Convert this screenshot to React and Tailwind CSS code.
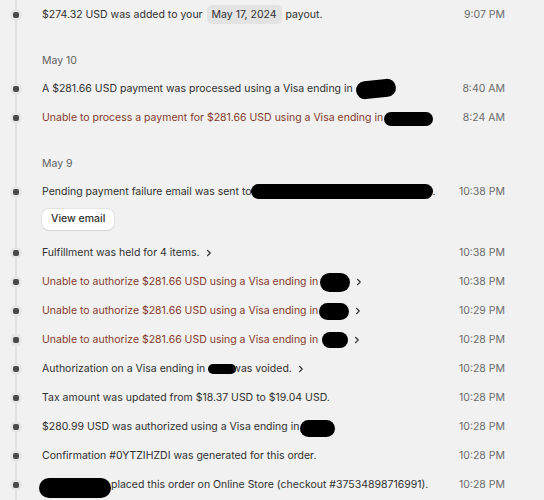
import React from 'react';

const Chevron = () => (
    <svg width="8" height="8" viewBox="0 0 8 8" className="ml-[5px] shrink-0">
        <path d="M2.6 1.4 5.2 4 2.6 6.6" fill="none" stroke="#303030" strokeWidth="1.3" strokeLinecap="round" strokeLinejoin="round" />
    </svg>
);

const Blob = ({ w, h, className = '' }) => (
    <span
        className={`inline-block bg-black rounded-full align-middle shrink-0 ${className}`}
        style={{ width: w, height: h }}
    />
);

const Row = ({ time, tone = 'normal', children }) => (
    <div className="flex items-center h-[29px]">
        <div className="w-[32px] flex justify-center shrink-0">
            <div className="w-[12px] h-[12px] rounded-full bg-[#e6e6e6] flex items-center justify-center">
                <div className="w-[6px] h-[6px] rounded-[2px] bg-[#4a4a4a]" />
            </div>
        </div>
        <div
            className={`ml-[10px] flex-1 flex items-center whitespace-nowrap ${tone === 'critical' ? 'text-[#86392b]' : 'text-[#303030]'}`}
        >
            {children}
        </div>
        <div className="pr-[39px] text-[#6b6b6b] whitespace-nowrap">{time}</div>
    </div>
);

const DayLabel = ({ children }) => (
    <div className="pl-[42px] pt-[22px] pb-[3px] h-[45px] leading-[20px] text-[#616161]">{children}</div>
);

export default function App() {
    return (
        <div
            className="relative w-[544px] h-[500px] overflow-hidden bg-[#f1f1f1] text-[10.5px]"
            style={{ fontFamily: 'Inter, "Noto Sans", sans-serif' }}
        >
            <div className="absolute left-[15px] top-0 bottom-0 w-[2px] bg-[#e2e2e2]" />
            <div className="relative">
                <Row time="9:07 PM">
                    <span>$274.32 USD was added to your</span>
                    <span className="ml-[4px] px-[5px] h-[19px] leading-[19px] rounded-[5px] bg-[#e3e3e3]">May 17, 2024</span>
                    <span className="ml-[4px]">payout.</span>
                </Row>

                <DayLabel>May 10</DayLabel>
                <Row time="8:40 AM">
                    <span>A $281.66 USD payment was processed using a Visa ending in</span>
                    <Blob w={40} h={18} className="ml-[3px] -rotate-6" />
                </Row>
                <Row time="8:24 AM" tone="critical">
                    <span>Unable to process a payment for $281.66 USD using a Visa ending in</span>
                    <Blob w={49} h={14} className="ml-[1px] mt-[3px]" />
                </Row>

                <DayLabel>May 9</DayLabel>
                <Row time="10:38 PM">
                    <span>Pending payment failure email was sent to</span>
                    <Blob w={182} h={15} className="-ml-[1px]" />
                    <span>.</span>
                </Row>
                <div className="pl-[42px] pt-[2.5px] pb-[9px]">
                    <button className="h-[21px] px-[9px] rounded-[7px] bg-white text-[#303030] font-medium shadow-[0_1px_0_#d4d4d4,0_0_0_1px_#e3e3e3]">
                        View email
                    </button>
                </div>
                <Row time="10:38 PM">
                    <span>Fulfillment was held for 4 items.</span>
                    <Chevron />
                </Row>
                <Row time="10:38 PM" tone="critical">
                    <span>Unable to authorize $281.66 USD using a Visa ending in</span>
                    <Blob w={30} h={19} className="ml-[2px]" />
                    <Chevron />
                </Row>
                <Row time="10:29 PM" tone="critical">
                    <span>Unable to authorize $281.66 USD using a Visa ending in</span>
                    <Blob w={30} h={17} className="ml-[1px]" />
                    <Chevron />
                </Row>
                <Row time="10:28 PM" tone="critical">
                    <span>Unable to authorize $281.66 USD using a Visa ending in</span>
                    <Blob w={26} h={16} className="ml-[4px]" />
                    <Chevron />
                </Row>
                <Row time="10:28 PM">
                    <span>Authorization on a Visa ending in</span>
                    <Blob w={28} h={10} className="ml-[3px]" />
                    <span className="-ml-[4px]">was voided.</span>
                    <Chevron />
                </Row>
                <Row time="10:28 PM">
                    <span>Tax amount was updated from $18.37 USD to $19.04 USD.</span>
                </Row>
                <Row time="10:28 PM">
                    <span>$280.99 USD was authorized using a Visa ending in</span>
                    <Blob w={35} h={17} className="ml-[1px] mt-[3px]" />
                </Row>
                <Row time="10:28 PM">
                    <span>Confirmation #0YTZIHZDI was generated for this order.</span>
                </Row>
                <Row time="10:28 PM">
                    <Blob w={72} h={20} className="-ml-[3px] mt-[5px]" />
                    <span>placed this order on Online Store (checkout #37534898716991).</span>
                </Row>
            </div>
        </div>
    );
}
